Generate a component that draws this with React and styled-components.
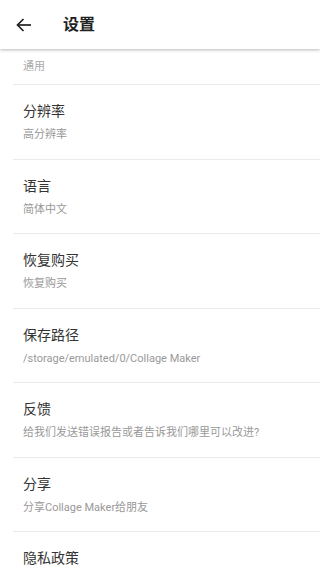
import React from 'react';
import styled, { createGlobalStyle } from 'styled-components';

const GlobalStyle = createGlobalStyle`
  body {
    margin: 0;
    background: #fff;
    font-family: 'Roboto', 'Noto Sans CJK SC', sans-serif;
  }
`;

const Page = styled.div`
  width: 320px;
  height: 569px;
  background: #fff;
  overflow: hidden;
`;

const Toolbar = styled.header`
  position: relative;
  z-index: 1;
  height: 49px;
  display: flex;
  align-items: center;
  background: #fff;
  box-shadow: 0 1px 3px rgba(0, 0, 0, 0.28);
`;

const BackButton = styled.button`
  width: 48px;
  height: 49px;
  display: flex;
  align-items: center;
  justify-content: center;
  padding: 0;
  margin: 0;
  border: none;
  background: none;
  color: #222;
`;

const Title = styled.h1`
  margin: 0 0 0 15px;
  font-size: 16px;
  font-weight: 700;
  color: #222;
  line-height: 20px;
`;

const SectionLabel = styled.div`
  height: 35px;
  padding: 10px 0 0 23px;
  box-sizing: border-box;
  font-size: 11px;
  line-height: 16px;
  color: #aaa;
`;

const Item = styled.div`
  height: 74.5px;
  box-sizing: border-box;
  margin-left: 13px;
  padding: 16px 0 0 10px;
  border-top: 1px solid #ebebeb;
`;

const ItemTitle = styled.div`
  font-size: 14px;
  line-height: 20px;
  color: #333;
`;

const ItemSub = styled.div`
  margin-top: 6px;
  font-size: 11px;
  line-height: 16px;
  color: #999;
`;

const items = [
  { title: '分辨率', sub: '高分辨率' },
  { title: '语言', sub: '简体中文' },
  { title: '恢复购买', sub: '恢复购买' },
  { title: '保存路径', sub: '/storage/emulated/0/Collage Maker' },
  { title: '反馈', sub: '给我们发送错误报告或者告诉我们哪里可以改进?' },
  { title: '分享', sub: '分享Collage Maker给朋友' },
  { title: '隐私政策', sub: '' },
];

const ArrowBack = () => (
  <svg width="16" height="16" viewBox="0 0 16 16" fill="none" stroke="currentColor" strokeWidth="1.7">
    <path d="M1.5 8H15" />
    <path d="M7.5 2L1.5 8L7.5 14" />
  </svg>
);

const App = () => (
  <Page>
    <GlobalStyle />
    <Toolbar>
      <BackButton aria-label="back">
        <ArrowBack />
      </BackButton>
      <Title>设置</Title>
    </Toolbar>
    <SectionLabel>通用</SectionLabel>
    {items.map((it) => (
      <Item key={it.title}>
        <ItemTitle>{it.title}</ItemTitle>
        {it.sub && <ItemSub>{it.sub}</ItemSub>}
      </Item>
    ))}
  </Page>
);

export default App;
